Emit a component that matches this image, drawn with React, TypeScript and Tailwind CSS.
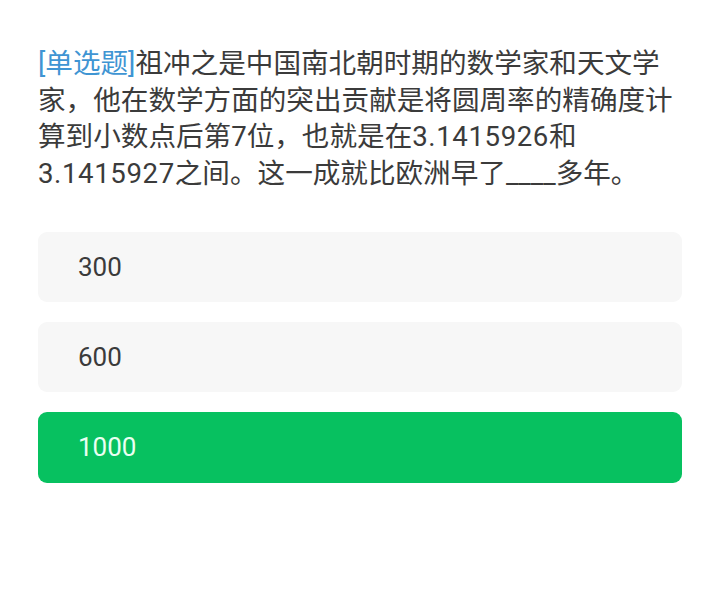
import React from 'react';

const options = [
  { label: '300', selected: false },
  { label: '600', selected: false },
  { label: '1000', selected: true },
];

export default function App() {
  return (
    <div
      className="min-h-[595px] w-[720px] bg-white px-[38px] pt-[46px]"
      style={{ fontFamily: 'Roboto, "Noto Sans CJK SC", sans-serif' }}
    >
      <p className="text-[27.6px] leading-[36.6px] text-[#3b3b3b]">
        <span className="text-[#3f95d3]">[单选题]</span>
        祖冲之是中国南北朝时期的数学家和天文学家，他在数学方面的突出贡献是将圆周率的精确度计算到小数点后第7位，也就是在<span className="tracking-[0.6px]">3.1415926</span>和<span className="tracking-[0.6px]">3.1415927</span>之间。这一成就比欧洲早了____多年。
      </p>
      <div className="mt-[40px] flex flex-col gap-[20px]">
        {options.map((o) => (
          <div
            key={o.label}
            className={
              o.selected
                ? 'flex h-[71px] items-center rounded-[9px] bg-[#07c160] pl-[40px] text-[26px] text-[#eafff2]'
                : 'flex h-[70px] items-center rounded-[9px] bg-[#f7f7f7] pl-[40px] text-[26px] text-[#3b3b3b]'
            }
          >
            {o.label}
          </div>
        ))}
      </div>
    </div>
  );
}
